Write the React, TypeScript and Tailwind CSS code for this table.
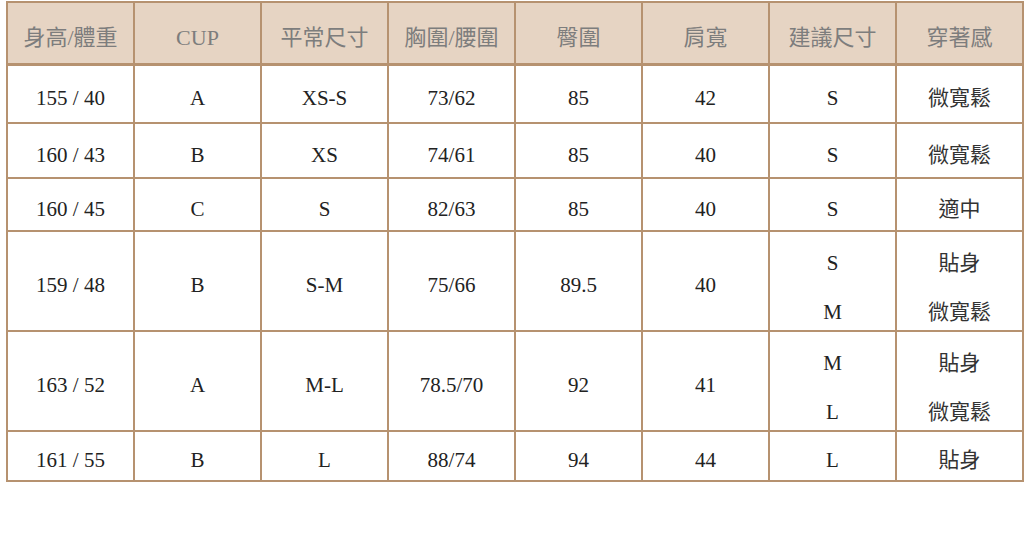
import React from 'react';

type Row = {
  hw: string;
  cup: string;
  usual: string;
  bust: string;
  hip: string;
  shoulder: string;
  sizes: string[];
  feel: string[];
  h: string;
};

const headers = ['身高/體重', 'CUP', '平常尺寸', '胸圍/腰圍', '臀圍', '肩寬', '建議尺寸', '穿著感'];

const rows: Row[] = [
  { hw: '155 / 40', cup: 'A', usual: 'XS-S', bust: '73/62', hip: '85', shoulder: '42', sizes: ['S'], feel: ['微寬鬆'], h: 'h-[59px]' },
  { hw: '160 / 43', cup: 'B', usual: 'XS', bust: '74/61', hip: '85', shoulder: '40', sizes: ['S'], feel: ['微寬鬆'], h: 'h-[55px]' },
  { hw: '160 / 45', cup: 'C', usual: 'S', bust: '82/63', hip: '85', shoulder: '40', sizes: ['S'], feel: ['適中'], h: 'h-[53px]' },
  { hw: '159 / 48', cup: 'B', usual: 'S-M', bust: '75/66', hip: '89.5', shoulder: '40', sizes: ['S', 'M'], feel: ['貼身', '微寬鬆'], h: 'h-[100px]' },
  { hw: '163 / 52', cup: 'A', usual: 'M-L', bust: '78.5/70', hip: '92', shoulder: '41', sizes: ['M', 'L'], feel: ['貼身', '微寬鬆'], h: 'h-[100px]' },
  { hw: '161 / 55', cup: 'B', usual: 'L', bust: '88/74', hip: '94', shoulder: '44', sizes: ['L'], feel: ['貼身'], h: 'h-[50px]' },
];

const cell = 'border-2 border-[#b69270] text-center align-middle px-0 pb-0 pt-[10px]';

// two suggestions stacked in one cell, ~49px apart
function Stack({ items }: { items: string[] }) {
  return (
    <div className="flex flex-col gap-[25px] -mt-[10px] pt-[13px]">
      {items.map((t, i) => (
        <div key={i} className="h-[24px] leading-[24px] flex items-center justify-center">
          {t}
        </div>
      ))}
    </div>
  );
}

export default function App() {
  return (
    <div className="w-[1024px] h-[557px] bg-white pl-[6px] pt-px">
      <table
        className="border-collapse table-fixed w-[1017px] text-[21px] text-[#222]"
        style={{ fontFamily: '"Liberation Serif", "Noto Sans CJK TC", serif' }}
      >
        <colgroup>
          {headers.map((h) => (
            <col key={h} className="w-[127px]" />
          ))}
        </colgroup>
        <thead>
          <tr className="h-[62px] bg-[#e6d4c3]">
            {headers.map((h) => (
              <th key={h} className={`${cell} border-b-[3px] font-normal text-[22px] text-[#7d7d7d]`}>
                {h}
              </th>
            ))}
          </tr>
        </thead>
        <tbody>
          {rows.map((r) => (
            <tr key={r.hw} className={r.h}>
              <td className={cell}>{r.hw}</td>
              <td className={cell}>{r.cup}</td>
              <td className={cell}>{r.usual}</td>
              <td className={cell}>{r.bust}</td>
              <td className={cell}>{r.hip}</td>
              <td className={cell}>{r.shoulder}</td>
              <td className={cell}>
                {r.sizes.length > 1 ? <Stack items={r.sizes} /> : r.sizes[0]}
              </td>
              <td className={`${cell} text-[#333]`}>
                {r.feel.length > 1 ? <Stack items={r.feel} /> : r.feel[0]}
              </td>
            </tr>
          ))}
        </tbody>
      </table>
    </div>
  );
}
